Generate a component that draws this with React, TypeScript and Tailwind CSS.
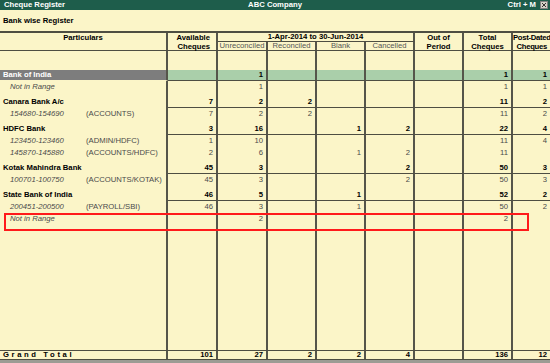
import React from "react";

type Row = { kind: "band" | "bank" | "sub"; name: string; tag?: string; italic?: boolean; vals: string[] };

const rows: Row[] = [
  { kind: "band", name: "Bank of India", vals: ["", "1", "", "", "", "", "1", "1"] },
  { kind: "sub", name: "Not in Range", italic: true, vals: ["", "1", "", "", "", "", "1", "1"] },
  { kind: "bank", name: "Canara Bank A/c", vals: ["7", "2", "2", "", "", "", "11", "2"] },
  { kind: "sub", name: "154680-154690", tag: "(ACCOUNTS)", vals: ["7", "2", "2", "", "", "", "11", "2"] },
  { kind: "bank", name: "HDFC Bank", vals: ["3", "16", "", "1", "2", "", "22", "4"] },
  { kind: "sub", name: "123450-123460", tag: "(ADMIN/HDFC)", vals: ["1", "10", "", "", "", "", "11", "4"] },
  { kind: "sub", name: "145870-145880", tag: "(ACCOUNTS/HDFC)", vals: ["2", "6", "", "1", "2", "", "11", ""] },
  { kind: "bank", name: "Kotak Mahindra Bank", vals: ["45", "3", "", "", "2", "", "50", "3"] },
  { kind: "sub", name: "100701-100750", tag: "(ACCOUNTS/KOTAK)", vals: ["45", "3", "", "", "2", "", "50", "3"] },
  { kind: "bank", name: "State Bank of India", vals: ["46", "5", "", "1", "", "", "52", "2"] },
  { kind: "sub", name: "200451-200500", tag: "(PAYROLL/SBI)", vals: ["46", "3", "", "1", "", "", "50", "2"] },
  { kind: "sub", name: "Not in Range", italic: true, vals: ["", "2", "", "", "", "", "2", ""] },
];

const G = "grid grid-cols-[168px_50px_50px_49px_49px_49px_49px_49px_1fr]";
const L = "border-[#4e4e42]";
const V = "border-r-2 border-r-[#55554a]";

function DataRow({ r }: { r: Row }) {
  if (r.kind === "band") {
    return (
      <div className={`${G} h-[11px]`}>
        <div className={`${V} border-b border-b-transparent bg-clip-padding bg-[#7d7d7d] text-white font-bold pl-[3px] leading-[10px]`}>
          {r.name}
        </div>
        {r.vals.map((v, i) => (
          <div
            key={i}
            className={`${i < 7 ? V : ""} border-b border-b-[#4e4e42] bg-[#aacfaa] text-black font-bold text-right pr-[3px] leading-[10px]`}
          >
            {v}
          </div>
        ))}
      </div>
    );
  }
  if (r.kind === "bank") {
    return (
      <div className={`${G} h-[15px]`}>
        <div className={`${V} text-black font-bold pl-[3px] pt-[3px] leading-[11px]`}>{r.name}</div>
        {r.vals.map((v, i) => (
          <div
            key={i}
            className={`${i < 7 ? V : ""} border-b border-b-[#4e4e42] text-black font-bold text-right pr-[3px] pt-[3px] leading-[11px]`}
          >
            {v}
          </div>
        ))}
      </div>
    );
  }
  return (
    <div className={`${G} h-[12px]`}>
      <div className={`${V} text-[#4a4a4a] pl-[10px] leading-[12px] flex`}>
        <span className="italic w-[76px] shrink-0">{r.name}</span>
        {r.tag && <span>{r.tag}</span>}
      </div>
      {r.vals.map((v, i) => (
        <div key={i} className={`${i < 7 ? V : ""} text-[#4a4a4a] text-right pr-[3px] leading-[12px]`}>
          {v}
        </div>
      ))}
    </div>
  );
}

function EmptyRow({ className }: { className: string }) {
  return (
    <div className={`${G} ${className}`}>
      {Array.from({ length: 9 }).map((_, i) => (
        <div key={i} className={i < 8 ? V : ""} />
      ))}
    </div>
  );
}

export default function App() {
  const totals = ["101", "27", "2", "2", "4", "", "136", "12"];
  return (
    <div
      className="w-[550px] h-[363px] bg-[#fbf5c8] flex flex-col text-[7.7px] text-black overflow-hidden"
      style={{ fontFamily: '"Liberation Sans", Arial, sans-serif' }}
    >
      {/* title bar */}
      <div className="h-[10px] bg-[#1e5d4b] text-white font-bold flex items-center pl-[4px] pr-[2px] relative leading-[10px]">
        <span>Cheque Register</span>
        <span className="absolute left-1/2 -translate-x-1/2">ABC Company</span>
        <span className="ml-auto mr-[4px]">Ctrl + M</span>
        <span className="w-[8px] h-[8px] bg-[#d6d3c8] border border-[#808080] flex items-center justify-center">
          <svg width="6" height="6" viewBox="0 0 6 6">
            <path d="M1 1L5 5M5 1L1 5" stroke="#333" strokeWidth="1" />
          </svg>
        </span>
      </div>

      {/* subtitle */}
      <div className="h-[21px] flex items-center pl-[3px] font-bold">Bank wise Register</div>

      {/* header */}
      <div className={`border-t-2 border-b ${L}`}>
        <div className={`${G} grid-rows-[9px_8px]`}>
          <div className={`row-span-2 ${V} text-center font-bold leading-[9px]`}>Particulars</div>
          <div className={`row-span-2 ${V} text-right pr-[6px] font-bold leading-[9px]`}>
            Available
            <br />
            Cheques
          </div>
          <div className={`col-span-4 ${V} border-b border-b-[#4e4e42] text-center font-bold leading-[8px]`}>
            1-Apr-2014 to 30-Jun-2014
          </div>
          <div className={`row-span-2 ${V} text-center font-bold leading-[9px]`}>
            Out of
            <br />
            Period
          </div>
          <div className={`row-span-2 ${V} text-center font-bold leading-[9px]`}>
            Total
            <br />
            Cheques
          </div>
          <div className="row-span-2 text-center font-bold leading-[9px] tracking-[-0.3px] whitespace-nowrap">
            Post-Dated
            <br />
            Cheques
          </div>
          <div className={`${V} text-center text-[#555] leading-[8px]`}>Unreconciled</div>
          <div className={`${V} text-center text-[#555] leading-[8px]`}>Reconciled</div>
          <div className={`${V} text-center text-[#555] leading-[8px]`}>Blank</div>
          <div className={`${V} text-center text-[#555] leading-[8px]`}>Cancelled</div>
        </div>
      </div>

      {/* body */}
      <div className="flex-1 flex flex-col relative">
        <EmptyRow className="h-[19px]" />
        {rows.map((r, i) => (
          <DataRow key={i} r={r} />
        ))}
        <EmptyRow className="flex-1" />
        <div className="absolute left-[4px] top-[162px] w-[525px] h-[18px] border-2 border-[#ff1a1a]" />
      </div>

      {/* grand total */}
      <div className={`${G} h-[10px] border-t border-b ${L}`}>
        <div className={`${V} font-bold pl-[3px] tracking-[2.6px] leading-[8px]`}>Grand Total</div>
        {totals.map((v, i) => (
          <div key={i} className={`${i < 7 ? V : ""} font-bold text-right pr-[3px] leading-[8px]`}>
            {v}
          </div>
        ))}
      </div>
      <div className="h-[3px] bg-[#9c9c94]" />
    </div>
  );
}
